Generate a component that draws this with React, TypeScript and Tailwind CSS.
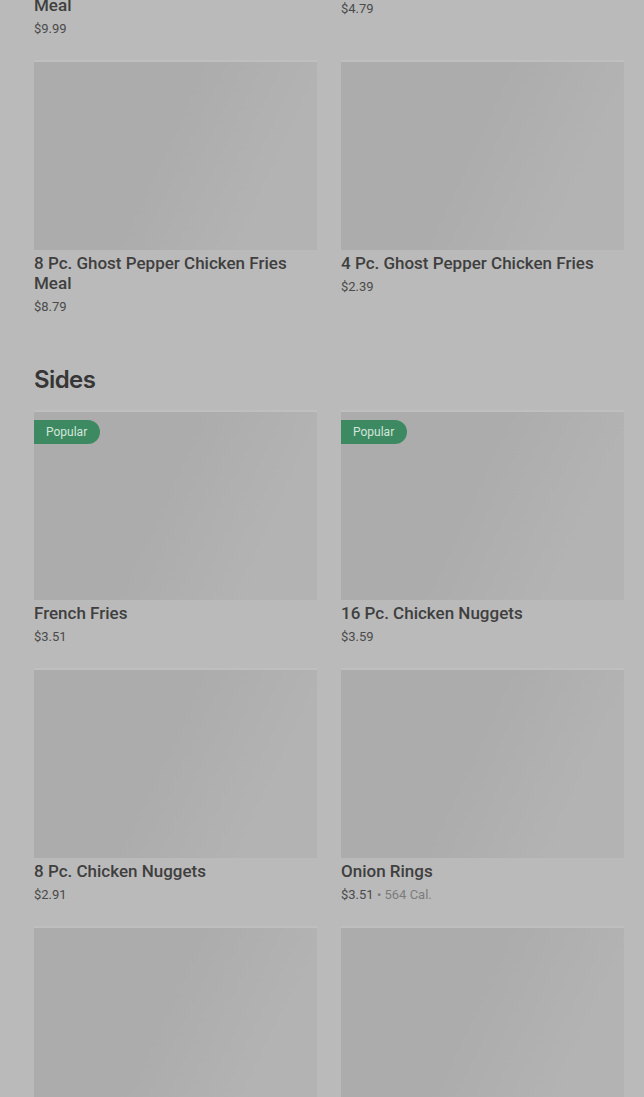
import React from "react";

type Item = { title: string; price: string; cal?: string; popular?: boolean };

const first: Item[] = [
  { title: "12 Pc. Ghost Pepper Chicken Fries Meal", price: "$9.99" },
  { title: "12 Pc. Ghost Pepper Chicken Fries", price: "$4.79" },
  { title: "8 Pc. Ghost Pepper Chicken Fries Meal", price: "$8.79" },
  { title: "4 Pc. Ghost Pepper Chicken Fries", price: "$2.39" },
];

const sides: Item[] = [
  { title: "French Fries", price: "$3.51", popular: true },
  { title: "16 Pc. Chicken Nuggets", price: "$3.59", popular: true },
  { title: "8 Pc. Chicken Nuggets", price: "$2.91" },
  { title: "Onion Rings", price: "$3.51", cal: "564 Cal." },
  { title: "4 Pc. Chicken Nuggets", price: "$1.99" },
  { title: "Mozzarella Sticks", price: "$3.29" },
];

function Card({ item }: { item: Item }) {
  return (
    <div className="flex flex-col">
      <div className="relative h-[188px] w-full bg-[linear-gradient(115deg,#acacac_45%,#b3b3b3_80%)] shadow-[0_-2px_0_#bfbfbf]">
        {item.popular && (
          <span className="absolute left-0 top-2 h-6 rounded-r-full bg-[#3d8a62] pl-3 pr-[13px] text-xs leading-6 text-[#d3e6da]">
            Popular
          </span>
        )}
      </div>
      <div className="mt-[3px] text-[17px] font-medium leading-5 text-[#3f3f3f]">{item.title}</div>
      <div className="mt-[5px] text-[13px] leading-[18px] text-[#4a4a4a]">
        {item.price}
        {item.cal && (
          <span className="text-[#7c7c7c]"> • {item.cal}</span>
        )}
      </div>
    </div>
  );
}

export default function App() {
  return (
    <div
      className="min-h-screen overflow-hidden bg-[#bababa]"
      style={{ fontFamily: "Roboto, 'Noto Sans', sans-serif" }}
    >
      <div className="-mt-[216px] pl-[34px] pr-[20px]">
        <section className="grid grid-cols-2 items-start gap-x-6 gap-y-6">
          {first.map((it) => (
            <Card key={it.title} item={it} />
          ))}
        </section>
        <h2
          className="mb-4 mt-[48px] text-2xl font-semibold leading-8 tracking-[-0.6px] text-[#363636]"
          style={{ fontFamily: "Inter, 'Noto Sans', sans-serif" }}
        >
          Sides
        </h2>
        <section className="grid grid-cols-2 items-start gap-x-6 gap-y-6 pb-10">
          {sides.map((it) => (
            <Card key={it.title} item={it} />
          ))}
        </section>
      </div>
    </div>
  );
}
